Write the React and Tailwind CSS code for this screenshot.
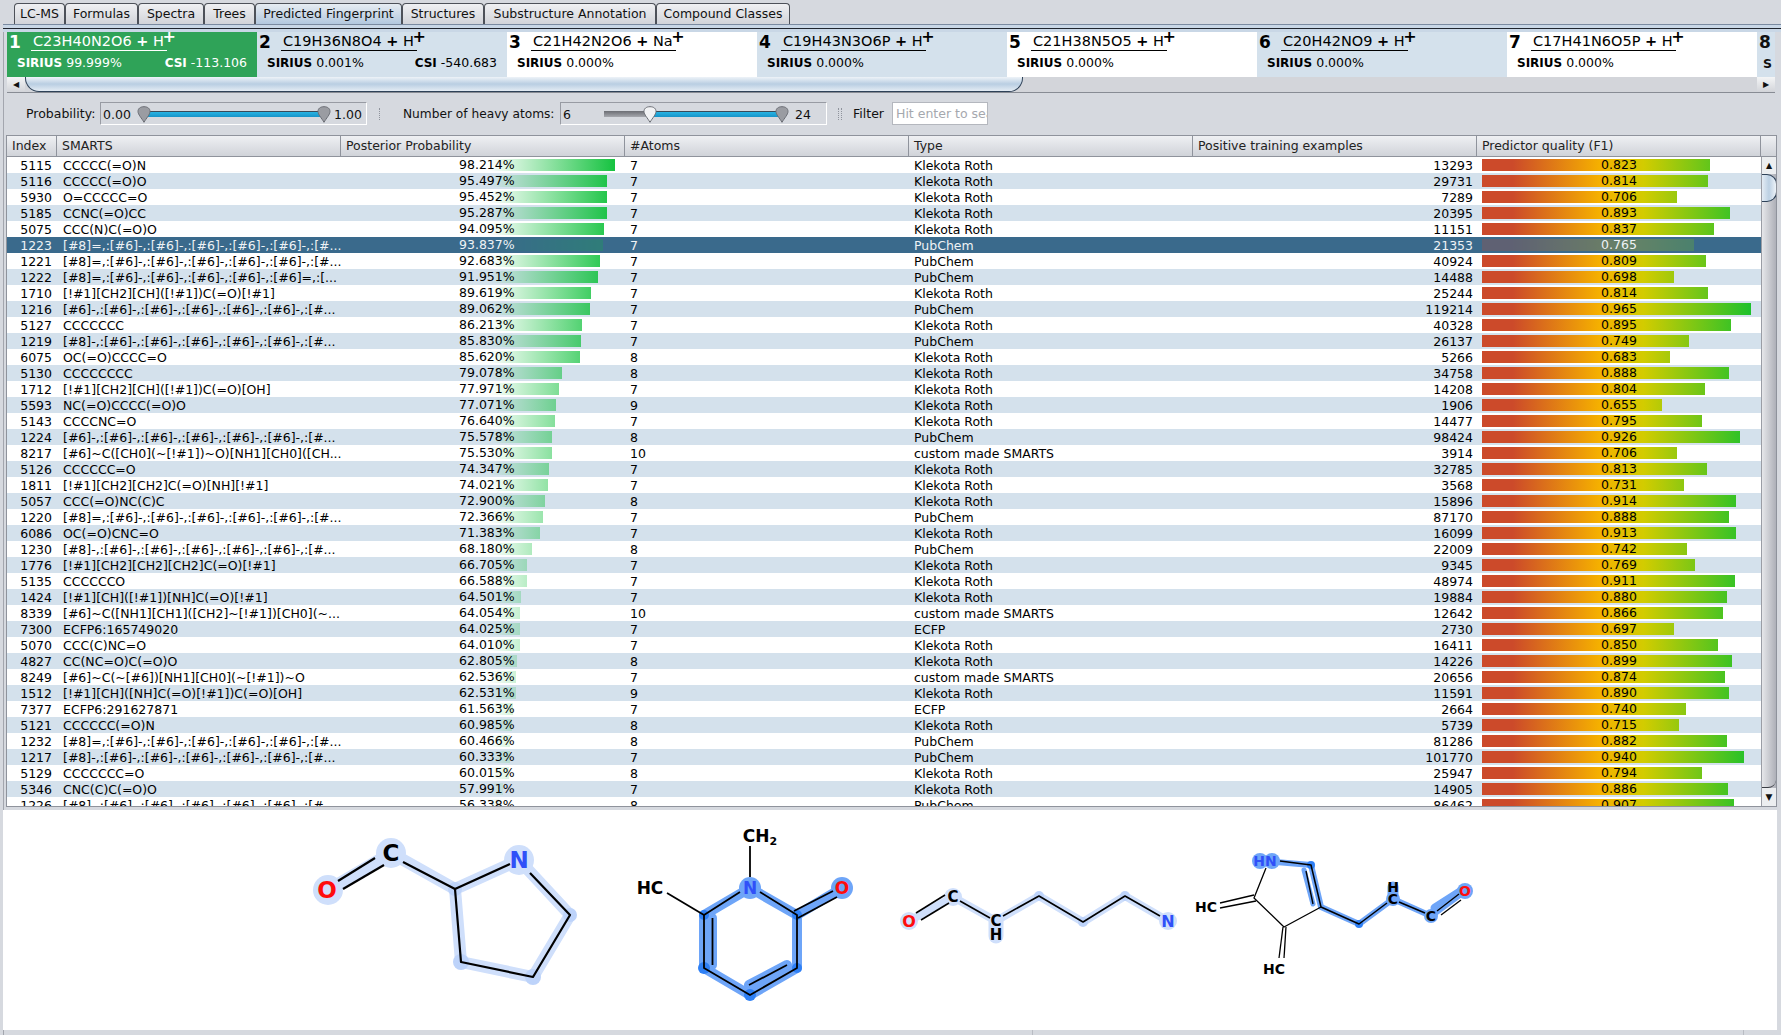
import React from 'react';

// Predicted Fingerprint view: tabs, candidate strip, filters, table, matched substructures.

const K = 'Klekota Roth';
const P = 'PubChem';
const C = 'custom made SMARTS';
const E = 'ECFP';
const O6 = '[#8]=,:[#6]-,:[#6]-,:[#6]-,:[#6]-,:[#6]-,:[#...';
const S6 = '[#8]-,:[#6]-,:[#6]-,:[#6]-,:[#6]-,:[#6]-,:[#...';
const H6 = '[#6]-,:[#6]-,:[#6]-,:[#6]-,:[#6]-,:[#6]-,:[#...';

const rows = [
  [5115, 'CCCCC(=O)N', 98.214, 7, K, 13293, 0.823],
  [5116, 'CCCCC(=O)O', 95.497, 7, K, 29731, 0.814],
  [5930, 'O=CCCCC=O', 95.452, 7, K, 7289, 0.706],
  [5185, 'CCNC(=O)CC', 95.287, 7, K, 20395, 0.893],
  [5075, 'CCC(N)C(=O)O', 94.095, 7, K, 11151, 0.837],
  [1223, O6, 93.837, 7, P, 21353, 0.765],
  [1221, O6, 92.683, 7, P, 40924, 0.809],
  [1222, '[#8]=,:[#6]-,:[#6]-,:[#6]-,:[#6]-,:[#6]=,:[...', 91.951, 7, P, 14488, 0.698],
  [1710, '[!#1][CH2][CH]([!#1])C(=O)[!#1]', 89.619, 7, K, 25244, 0.814],
  [1216, H6, 89.062, 7, P, 119214, 0.965],
  [5127, 'CCCCCCC', 86.213, 7, K, 40328, 0.895],
  [1219, S6, 85.83, 7, P, 26137, 0.749],
  [6075, 'OC(=O)CCCC=O', 85.62, 8, K, 5266, 0.683],
  [5130, 'CCCCCCCC', 79.078, 8, K, 34758, 0.888],
  [1712, '[!#1][CH2][CH]([!#1])C(=O)[OH]', 77.971, 7, K, 14208, 0.804],
  [5593, 'NC(=O)CCCC(=O)O', 77.071, 9, K, 1906, 0.655],
  [5143, 'CCCCNC=O', 76.64, 7, K, 14477, 0.795],
  [1224, H6, 75.578, 8, P, 98424, 0.926],
  [8217, '[#6]~C([CH0](~[!#1])~O)[NH1][CH0]([CH...', 75.53, 10, C, 3914, 0.706],
  [5126, 'CCCCCC=O', 74.347, 7, K, 32785, 0.813],
  [1811, '[!#1][CH2][CH2]C(=O)[NH][!#1]', 74.021, 7, K, 3568, 0.731],
  [5057, 'CCC(=O)NC(C)C', 72.9, 8, K, 15896, 0.914],
  [1220, O6, 72.366, 7, P, 87170, 0.888],
  [6086, 'OC(=O)CNC=O', 71.383, 7, K, 16099, 0.913],
  [1230, S6, 68.18, 8, P, 22009, 0.742],
  [1776, '[!#1][CH2][CH2][CH2]C(=O)[!#1]', 66.705, 7, K, 9345, 0.769],
  [5135, 'CCCCCCO', 66.588, 7, K, 48974, 0.911],
  [1424, '[!#1][CH]([!#1])[NH]C(=O)[!#1]', 64.501, 7, K, 19884, 0.88],
  [8339, '[#6]~C([NH1][CH1]([CH2]~[!#1])[CH0](~...', 64.054, 10, C, 12642, 0.866],
  [7300, 'ECFP6:165749020', 64.025, 7, E, 2730, 0.697],
  [5070, 'CCC(C)NC=O', 64.01, 7, K, 16411, 0.85],
  [4827, 'CC(NC=O)C(=O)O', 62.805, 8, K, 14226, 0.899],
  [8249, '[#6]~C(~[#6])[NH1][CH0](~[!#1])~O', 62.536, 7, C, 20656, 0.874],
  [1512, '[!#1][CH]([NH]C(=O)[!#1])C(=O)[OH]', 62.531, 9, K, 11591, 0.89],
  [7377, 'ECFP6:291627871', 61.563, 7, E, 2664, 0.74],
  [5121, 'CCCCCC(=O)N', 60.985, 8, K, 5739, 0.715],
  [1232, O6, 60.466, 8, P, 81286, 0.882],
  [1217, S6, 60.333, 7, P, 101770, 0.94],
  [5129, 'CCCCCCC=O', 60.015, 8, K, 25947, 0.794],
  [5346, 'CNC(C)C(=O)O', 57.991, 7, K, 14905, 0.886],
  [1226, S6, 56.338, 8, P, 86462, 0.907],
];

const tabs = [
  ['LC-MS', 'w-[51px]'],
  ['Formulas', 'w-[73px]'],
  ['Spectra', 'w-[66px]'],
  ['Trees', 'w-[51px]'],
  ['Predicted Fingerprint', 'w-[147px]'],
  ['Structures', 'w-[82px]'],
  ['Substructure Annotation', 'w-[172px]'],
  ['Compound Classes', 'w-[134px]'],
];

const candidates = [
  { n: 1, f: 'C23H40N2O6', ad: 'H', sirius: '99.999%', csi: '-113.106', bg: 'bg-[#2fa358] text-white', line: 'border-white' },
  { n: 2, f: 'C19H36N8O4', ad: 'H', sirius: '0.001%', csi: '-540.683', bg: 'bg-[#d4e1ec] text-black', line: 'border-black' },
  { n: 3, f: 'C21H42N2O6', ad: 'Na', sirius: '0.000%', bg: 'bg-white text-black', line: 'border-black' },
  { n: 4, f: 'C19H43N3O6P', ad: 'H', sirius: '0.000%', bg: 'bg-[#d4e1ec] text-black', line: 'border-black' },
  { n: 5, f: 'C21H38N5O5', ad: 'H', sirius: '0.000%', bg: 'bg-white text-black', line: 'border-black' },
  { n: 6, f: 'C20H42NO9', ad: 'H', sirius: '0.000%', bg: 'bg-[#d4e1ec] text-black', line: 'border-black' },
  { n: 7, f: 'C17H41N6O5P', ad: 'H', sirius: '0.000%', bg: 'bg-white text-black', line: 'border-black' },
];

function Candidate({ c }) {
  return (
    <div className={`w-[250px] shrink-0 h-[45px] pl-[2px] relative ${c.bg}`}>
      <div className="flex h-[19px]">
        <span className="w-[23px] text-[17px] font-bold leading-[20px]">{c.n}</span>
        <span className={`relative ml-[-1px] pl-[2px] pr-[3px] h-[19px] text-[14.5px] leading-[18px] border-b ${c.line}`}>
          {c.f} <b>+</b> {c.ad}
          <b className="absolute right-[-9px] top-[-4px] text-[16px]">+</b>
        </span>
      </div>
      <div className="flex justify-between mt-[4px] pl-[8px] pr-[10px] text-[12.5px] leading-[16px]">
        <span><b className="text-[12px]">SIRIUS</b> {c.sirius}</span>
        {c.csi && <span><b className="text-[12px]">CSI</b> {c.csi}</span>}
      </div>
    </div>
  );
}

function Knob({ className, light }) {
  return (
    <svg className={`absolute top-[3px] ${className}`} width="14" height="17" viewBox="0 0 14 17">
      <path
        d="M7 .7C3.2.7 1 2.6 1 5.5c0 3 3.6 6.6 6 10.8 2.4-4.2 6-7.8 6-10.8C13 2.6 10.8.7 7 .7Z"
        fill={light ? '#f1f2f4' : '#9a9ca2'}
        stroke="#6b6e75"
      />
    </svg>
  );
}

function Track({ className }) {
  return <div className={`absolute top-[8px] h-[6px] border-t border-[#3a4a58] bg-gradient-to-b from-[#28b4e4] to-[#1793c8] ${className}`} />;
}

function Bar({ width, selected, gradient }) {
  return (
    <div
      className={`absolute top-[2px] h-[12px] overflow-hidden ${selected ? 'opacity-25' : ''}`}
      style={{ width }}
    >
      <div className={`h-full ${gradient}`} />
    </div>
  );
}

function Row({ r, i }) {
  const selected = r[0] === 1223;
  const bg = selected ? 'bg-[#3a6a8c] text-[#eef2f5]' : i % 2 ? 'bg-[#d4e1ec] text-black' : 'bg-white text-black';
  return (
    <div className={`flex h-[16px] leading-[18px] overflow-hidden ${bg}`}>
      <div className="w-[50px] pr-[5px] text-right">{r[0]}</div>
      <div className="w-[284px] pl-[6px] whitespace-nowrap overflow-hidden">{r[1]}</div>
      <div className="w-[284px] relative">
        <div className="absolute left-[1px] top-0 bottom-0">
          <Bar
            width={`${2.78 * r[2]}px`}
            selected={selected}
            gradient="w-[278px] bg-gradient-to-r from-[#0cc03800] from-[53%] to-[#0cc038]"
          />
        </div>
        <div className="absolute left-[118px] top-[-1px]">{r[2].toFixed(3)}%</div>
      </div>
      <div className="w-[284px] pl-[5px]">{r[3]}</div>
      <div className="w-[284px] pl-[5px]">{r[4]}</div>
      <div className="w-[284px] pr-[4px] text-right">{r[5]}</div>
      <div className="w-[284px] relative">
        <div className="absolute left-[5px] top-0 bottom-0">
          <Bar
            width={`${287 * r[6] - 8}px`}
            selected={selected}
            gradient="w-[279px] bg-[linear-gradient(90deg,#cc4a2a_11%,#f5b000_42%,#d2cc00_58%,#0cc030_100%)]"
          />
        </div>
        <div className="absolute left-0 right-0 top-[-1px] text-center">{r[6].toFixed(3)}</div>
      </div>
    </div>
  );
}

function Atom({ x, y, size, color = '#000', children }) {
  return (
    <text x={x} y={y} fontSize={size} fontWeight="700" fill={color} textAnchor="middle" dominantBaseline="central" fontFamily="'DejaVu Sans', sans-serif">
      {children}
    </text>
  );
}

function Seg({ p, w, c, cap = 'round', o }) {
  return <polyline points={p} fill="none" stroke={c} strokeWidth={w} strokeLinecap={cap} strokeLinejoin="round" opacity={o} />;
}

const RED = '#ff0d0d';
const BLUE = '#3050f8';
const PALE = '#cfdffb';
const PALE_DOT = '#bdd3fa';
const STRONG = '#6ea5f8';
const DOT = '#2f80f5';

function Molecules() {
  return (
    <svg className="block" width="1781" height="220" viewBox="0 810 1781 220">
      {/* pyrrolidine */}
      <Seg p="328,890 391,853 455,889 519,860 570,915 533,977 461,962 455,889" w={12} c={PALE} />
      {[[328, 890, 15, PALE], [391, 853, 15, PALE], [519, 860, 15, PALE], [455, 889, 7, PALE_DOT], [570, 915, 7, PALE_DOT], [533, 977, 8, PALE_DOT], [461, 962, 8, PALE_DOT]].map(([x, y, r, f]) => (
        <circle key={`${x}`} cx={x} cy={y} r={r} fill={f} />
      ))}
      <Seg p="338,881 375,858" w={2.2} c="#000" cap="butt" />
      <Seg p="343,889 384,865" w={2.2} c="#000" cap="butt" />
      <Seg p="403,862 455,889 510,864" w={2.2} c="#000" cap="butt" />
      <Seg p="530,873 570,915 533,977 461,962 455,889" w={2.2} c="#000" cap="butt" />
      <Atom x={391} y={853} size={23}>C</Atom>
      <Atom x={519} y={860} size={23} color={BLUE}>N</Atom>
      <Atom x={327} y={890} size={23} color={RED}>O</Atom>

      {/* pyridone */}
      <Seg p="750,888 704,915 704,968 750,995 797,968 797,915 750,888" w={10} c={STRONG} />
      <Seg p="797,915 842,888" w={10} c={STRONG} />
      <Seg p="712,918 712,965" w={10} c={STRONG} />
      <Seg p="749,985 787,965" w={10} c={STRONG} />
      {[[750, 888, 11, STRONG], [842, 888, 11, STRONG], [704, 915, 5, DOT], [797, 915, 5, DOT], [704, 968, 6, DOT], [797, 968, 5, DOT], [750, 995, 6, DOT]].map(([x, y, r, f]) => (
        <circle key={`${x}${y}`} cx={x} cy={y} r={r} fill={f} />
      ))}
      <Seg p="750,846 750,877" w={1.8} c="#000" cap="butt" />
      <Seg p="667,893 704,915 740,892" w={1.8} c="#000" cap="butt" />
      <Seg p="760,892 797,915 797,968 750,995 704,968 704,915" w={1.8} c="#000" cap="butt" />
      <Seg p="712.5,918 712.5,965" w={1.8} c="#000" cap="butt" />
      <Seg p="749,985 787,965" w={1.8} c="#000" cap="butt" />
      <Seg p="794,911 833,891" w={1.8} c="#000" cap="butt" />
      <Seg p="798,918 837,897" w={1.8} c="#000" cap="butt" />
      <text x={760} y={842} fontSize={17} fontWeight="700" textAnchor="middle" fontFamily="'DejaVu Sans', sans-serif">
        CH<tspan fontSize={11} dy={3}>2</tspan>
      </text>
      <Atom x={650} y={888} size={17}>HC</Atom>
      <Atom x={750} y={888} size={17} color={BLUE}>N</Atom>
      <Atom x={842} y={888} size={17} color={RED}>O</Atom>

      {/* open chain */}
      <Seg p="909,921 953,897 996,921 1039,896 1083,922 1125,896 1168,921" w={8} c={PALE} />
      <Seg p="996,921 996,936" w={15} c={PALE} />
      {[[909, 921, 9, PALE], [953, 897, 9, PALE], [1168, 921, 9, PALE], [1039, 896, 5, PALE_DOT], [1083, 922, 5, PALE_DOT], [1125, 896, 5, PALE_DOT]].map(([x, y, r, f]) => (
        <circle key={`${x}`} cx={x} cy={y} r={r} fill={f} />
      ))}
      <Seg p="916,913 945,895" w={1.6} c="#000" cap="butt" />
      <Seg p="921,920 949,903" w={1.6} c="#000" cap="butt" />
      <Seg p="960,901 990,918" w={1.6} c="#000" cap="butt" />
      <Seg p="1003,916 1039,896 1083,922 1125,896 1160,916" w={1.6} c="#000" cap="butt" />
      <Atom x={909} y={921} size={16} color={RED}>O</Atom>
      <Atom x={953} y={897} size={15}>C</Atom>
      <Atom x={996} y={921} size={15}>C</Atom>
      <Atom x={996} y={935} size={15}>H</Atom>
      <Atom x={1168} y={921} size={16} color={BLUE}>N</Atom>

      {/* pyrrole */}
      <Seg p="1265,861 1311,865 1321,907 1359,924 1393,899 1431,916 1465,891" w={6} c={STRONG} />
      <Seg p="1304,870 1313,904" w={5} c={STRONG} />
      <Seg p="1393,887 1393,899" w={11} c={STRONG} />
      <Seg p="1435,908 1460,892" w={9} c={STRONG} />
      {[[1260, 861, 8, STRONG], [1272, 861, 8, STRONG], [1311, 865, 4, DOT], [1359, 924, 4, DOT], [1393, 899, 7, STRONG], [1431, 916, 7, STRONG], [1465, 891, 8, STRONG]].map(([x, y, r, f]) => (
        <circle key={`${x}`} cx={x} cy={y} r={r} fill={f} />
      ))}
      <Seg p="1266,868 1254,898 1284,927 1321,907" w={1.3} c="#000" cap="butt" />
      <Seg p="1280,861 1311,865 1321,907 1359,924 1387,903" w={1.5} c="#000" cap="butt" />
      <Seg p="1306,871 1313,904" w={1.4} c="#000" cap="butt" />
      <Seg p="1399,902 1425,913" w={1.5} c="#000" cap="butt" />
      <Seg p="1437,911 1459,894" w={1.3} c="#000" cap="butt" />
      <Seg p="1441,915 1461,900" w={1.3} c="#000" cap="butt" />
      <Seg p="1220,903 1254,895" w={1.3} c="#000" cap="butt" />
      <Seg p="1220,908 1256,901" w={1.3} c="#000" cap="butt" />
      <Seg p="1283,927 1279,958" w={1.3} c="#000" cap="butt" />
      <Seg p="1286,927 1284,958" w={1.3} c="#000" cap="butt" />
      <Atom x={1265} y={861} size={14} color={BLUE}>HN</Atom>
      <Atom x={1206} y={907} size={14}>HC</Atom>
      <Atom x={1274} y={969} size={14}>HC</Atom>
      <Atom x={1393} y={899} size={14}>C</Atom>
      <Atom x={1393} y={887} size={14}>H</Atom>
      <Atom x={1431} y={916} size={14}>C</Atom>
      <Atom x={1465} y={891} size={14} color={RED}>O</Atom>
    </svg>
  );
}

export default function App() {
  const sep = 'border-r border-[#8f939c] flex items-center pl-[5px] h-full';
  return (
    <div className="w-[1781px] h-[1035px] overflow-hidden bg-[#d6d9df] text-[12.5px] text-[#111] font-['DejaVu_Sans',sans-serif]">
      {/* Tabs */}
      <div className="flex h-[24px] pt-[3px] pl-[14px]">
        {tabs.map(([label, w]) => (
          <div
            key={label}
            className={`${w} h-[21px] flex items-center justify-center border border-b-0 border-[#4d5159] rounded-t-[4px] whitespace-nowrap ${
              label === 'Predicted Fingerprint' ? 'bg-gradient-to-b from-[#e6ecf2] to-[#b3c8de]' : 'bg-gradient-to-b from-[#eff0f3] to-[#d2d4d9]'
            }`}
          >
            {label}
          </div>
        ))}
      </div>
      <div className="h-[8px] ml-[3px] bg-[#c9d7e6] border-t border-[#7a8aa0] relative">
        <div className="absolute left-0 right-0 top-[3px] h-px bg-[#20252e]" />
      </div>

      <div className="ml-[3px] mr-[4px] border-l border-[#a3a6ae] h-[1003px] pl-[3px]">
        {/* Candidate strip */}
        <div className="flex w-[1768px] overflow-hidden">
          {candidates.map((c) => (
            <Candidate key={c.n} c={c} />
          ))}
          <div className="w-[18px] shrink-0 h-[45px] bg-[#d4e1ec] pl-[2px] overflow-hidden">
            <div className="text-[17px] font-bold leading-[20px]">8</div>
            <div className="mt-[3px] pl-[4px] font-bold">S</div>
          </div>
        </div>

        {/* Horizontal scrollbar */}
        <div className="flex w-[1768px] h-[16px] border-b border-[#888c94] bg-[#d3d5da]">
          <div className="w-[18px] flex items-center justify-center bg-gradient-to-b from-[#f4f5f6] to-[#d2d4d9] text-[8px]">◀</div>
          <div className="w-[998px] rounded-b-[14px] border-b border-l border-r border-[#2f4258] bg-gradient-to-b from-[#eef3f8] via-[#b9cee2] to-[#e4ecf4]" />
          <div className="flex-1" />
          <div className="w-[18px] flex items-center justify-center bg-gradient-to-b from-[#f4f5f6] to-[#d2d4d9] text-[8px]">▶</div>
        </div>

        {/* Filters */}
        <div className="flex items-center h-[23px] mt-[9px]">
          <span className="ml-[19px] w-[74px] pt-px">Probability:</span>
          <div className="relative w-[267px] h-[23px] border border-[#989ba3] border-b-white border-r-white">
            <span className="absolute left-[2px] top-[3px]">0.00</span>
            <Track className="left-[43px] right-[43px]" />
            <Knob className="left-[36px]" />
            <Knob className="left-[216px]" />
            <span className="absolute left-[233px] top-[3px]">1.00</span>
          </div>
          <span className="w-px h-[12px] ml-[12px] border-l border-dotted border-[#8f939c]" />
          <span className="ml-[23px] w-[157px] pt-px whitespace-nowrap text-[12.2px]">Number of heavy atoms:</span>
          <div className="relative w-[267px] h-[23px] border border-[#989ba3] border-b-white border-r-white">
            <span className="absolute left-[2px] top-[3px]">6</span>
            <div className="absolute left-[43px] w-[46px] top-[8px] h-[6px] bg-gradient-to-b from-[#6c6e74] to-[#a6a8ae]" />
            <Track className="left-[89px] w-[132px]" />
            <Knob className="left-[82px]" light />
            <Knob className="left-[214px]" />
            <span className="absolute left-[234px] top-[3px]">24</span>
          </div>
          <span className="w-[4px] h-[12px] ml-[11px] border-x border-dotted border-[#8f939c]" />
          <span className="ml-[11px] w-[39px] pt-px">Filter</span>
          <div className="w-[96px] h-[23px] bg-white border border-[#b4b7be] pl-[3px] leading-[21px] text-[#a5a8ae] overflow-hidden whitespace-nowrap">
            Hit enter to search
          </div>
        </div>

        {/* Fingerprint table */}
        <div className="mt-[10px] -ml-px w-[1771px] h-[672px] border border-[#8f939c] overflow-hidden bg-white">
          <div className="flex h-[21px] border-b border-[#8f939c] bg-gradient-to-b from-[#eff0f3] to-[#d0d3d9] text-[#222]">
            <div className={`w-[50px] ${sep} pl-[3px]`}>Index</div>
            <div className={`w-[284px] ${sep}`}>SMARTS</div>
            <div className={`w-[284px] ${sep}`}>Posterior Probability</div>
            <div className={`w-[284px] ${sep}`}>#Atoms</div>
            <div className={`w-[284px] ${sep}`}>Type</div>
            <div className={`w-[284px] ${sep}`}>Positive training examples</div>
            <div className={`w-[284px] ${sep}`}>Predictor quality (F1)</div>
          </div>
          <div className="flex h-[650px]">
            <div className="w-[1754px] overflow-hidden">
              {rows.map((r, i) => (
                <Row key={r[0]} r={r} i={i} />
              ))}
            </div>
            {/* Vertical scrollbar */}
            <div className="flex flex-1 flex-col border-l border-[#9a9da5] bg-gradient-to-r from-[#e6e7ea] to-[#aeb0b8]">
              <div className="h-[17px] flex items-center justify-center text-[8px] bg-[#eceef0]">▲</div>
              <div className="h-[28px] -mr-px rounded-r-[10px] border-y border-r border-[#2f4258] bg-gradient-to-r from-[#e4ecf4] via-[#bcd0e3] to-[#eef3f8]" />
              <div className="flex-1 rounded-br-[8px] border-b border-[#3a3d44]" />
              <div className="h-[19px] flex items-center justify-center text-[9px] bg-[#eceef0]">▼</div>
            </div>
          </div>
        </div>

        {/* Matched substructures */}
        <div className="mt-[3px] -ml-[4px] w-[1774px] h-[220px] bg-white overflow-hidden">
          <div className="-ml-[3px]">
            <Molecules />
          </div>
        </div>

        {/* Status strip under the panel */}
        <div className="flex h-[5px] -ml-[4px]">
          <div className="w-[1030px] border-r border-[#b9bcc3]" />
          <div className="w-[711px] border-r border-[#b9bcc3]" />
        </div>
      </div>
    </div>
  );
}
